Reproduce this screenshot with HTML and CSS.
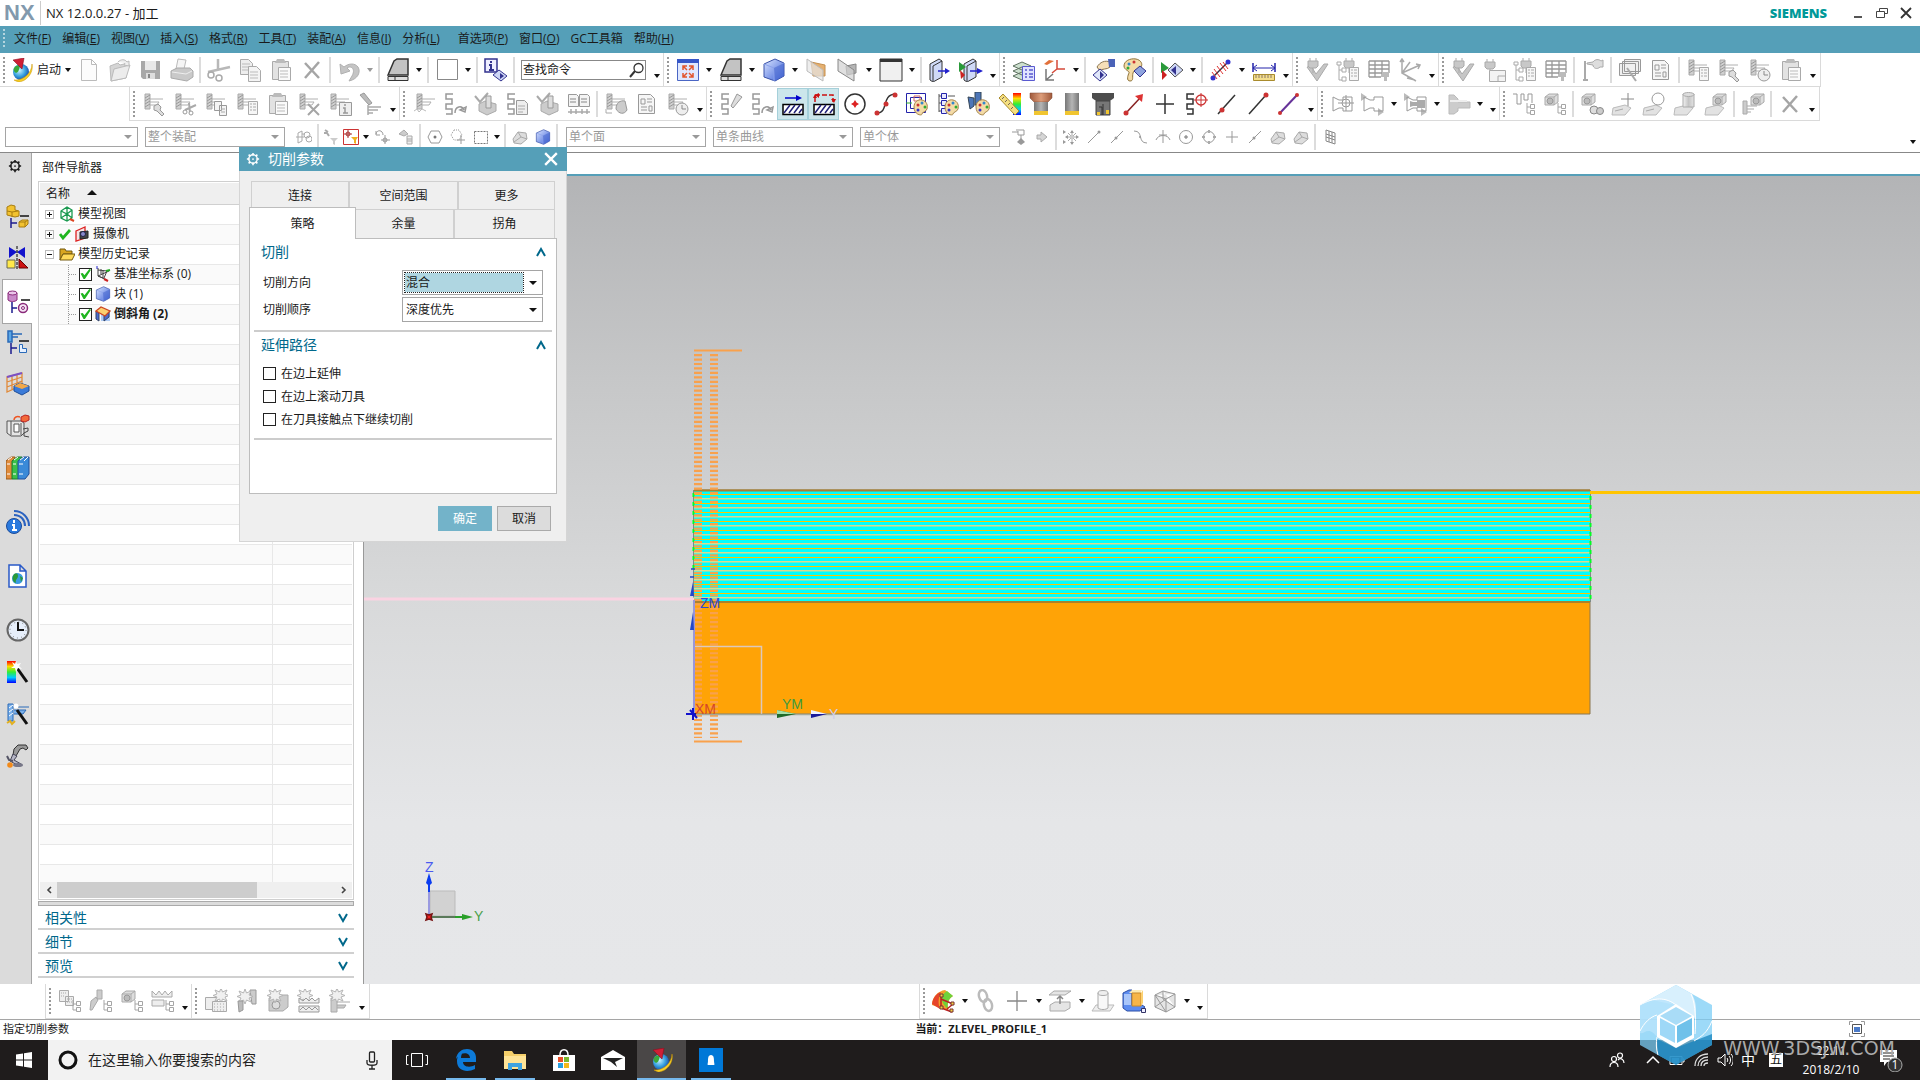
FILE: index.html
```html
<!DOCTYPE html>
<html lang="zh-CN">

<head>
  <meta charset="UTF-8">
  <meta name="viewport" content="width=device-width, initial-scale=1.0">
  <title>NX 12.0.0.27 - 加工</title>
  <link rel="stylesheet" href="styles.css">
</head>

<body>
  <!-- icon sprite -->
  <svg class="sprite" aria-hidden="true">
    <defs>
      <linearGradient id="g-gray" x1="0" y1="0" x2="1" y2="0"><stop offset="0" stop-color="#f2f2f2"/><stop offset=".5" stop-color="#c4c4c4"/><stop offset="1" stop-color="#e4e4e4"/></linearGradient>
      <linearGradient id="g-blue" x1="0" y1="0" x2="1" y2="1"><stop offset="0" stop-color="#dbe6ff"/><stop offset="1" stop-color="#3a5fd8"/></linearGradient>
      <linearGradient id="g-steel" x1="0" y1="0" x2="1" y2="0"><stop offset="0" stop-color="#777"/><stop offset=".5" stop-color="#b5b5b5"/><stop offset="1" stop-color="#777"/></linearGradient>
      <linearGradient id="g-copper" x1="0" y1="0" x2="1" y2="0"><stop offset="0" stop-color="#a05a3c"/><stop offset=".5" stop-color="#dd9d7a"/><stop offset="1" stop-color="#a05a3c"/></linearGradient>
      <linearGradient id="g-rain" x1="0" y1="0" x2="0" y2="1"><stop offset="0" stop-color="#f00"/><stop offset=".25" stop-color="#fd0"/><stop offset=".5" stop-color="#3e3"/><stop offset=".75" stop-color="#0cf"/><stop offset="1" stop-color="#00f"/></linearGradient>
      <radialGradient id="g-globe" cx=".4" cy=".4" r=".6"><stop offset="0" stop-color="#cdf2ff"/><stop offset=".6" stop-color="#3aa4e0"/><stop offset="1" stop-color="#1a57b0"/></radialGradient>

      <!-- shared pieces -->
      <g id="p-drill"><path d="M3 2h5v15H3z" fill="#d0d0d0" stroke="#aaa"/><path d="M3 6l5-3M3 9l5-3M3 12l5-3M3 15l5-3" stroke="#999"/><path d="M8 7h13M8 10h9l-2 3H8" fill="none" stroke="#b0b0b0"/></g>
      <g id="p-tree" fill="#fff" stroke="#a5a5a5"><path d="M15 11v10h3M15 15h3" fill="none"/><path d="M18.500 12.500h4v4h-4zM18.500 18.500h4v4h-4z"/></g>
      <g id="p-page" fill="#f6f6f6" stroke="#aaa"><path d="M13.500 9.500h9v13h-9z"/><path d="M15 12h2M18 12h3M15 15h2M18 15h3M15 18h2M18 18h3" fill="none"/></g>
      <g id="p-plug" fill="#c8c8c8" stroke="#aaa"><path d="M3 4h10v5l-2 2H5L3 9zM5 1v3M11 1v3M8 11v5"/></g>
      <g id="p-block"><path d="M2 5l4-3h9v8l-4 3H2z" fill="#ddd" stroke="#aaa"/><path d="M2 5h9v8M11 5l4-3" fill="none" stroke="#aaa"/><circle cx="7" cy="9" r="3" fill="#bbb" stroke="#999"/></g>
      <g id="p-spark" stroke="#b5b5b5" fill="#f0f0f0"><path d="M12 1l1.500 4L18 3l-2 4 4 1.500-4 1.500 2 4-4.500-2L12 16l-1.500-4L6 14l2-4-4-1.500L8 7 6 3l4.500 2z"/></g>
      <g id="p-palette"><path d="M9 15c0-5 4-8 8-7 5 1 6 6 5 9s-5 3-5 5-8 1-8-7z" fill="#f4dba6" stroke="#a5844a"/><circle cx="13" cy="13" r="1.500" fill="#c33"/><circle cx="17" cy="11" r="1.500" fill="#38c"/><circle cx="20" cy="15" r="1.500" fill="#3a3"/><circle cx="13" cy="18" r="1.500" fill="#33c"/></g>
      <g id="p-snake"><path d="M10 2H3v5h6v5H3v5h6v5H3" fill="none" stroke-width="1.500"/></g>
      <g id="p-holder"><path d="M3 5l6 3h4V5h9v14h-9v-3H9l-6 3z" fill="none" stroke="#999"/></g>

      <symbol id="i-globe" viewBox="0 0 24 24"><circle cx="11" cy="14" r="8" fill="url(#g-globe)"/><path d="M4 10c2-3 4-3 6-2-1 3-1 6-4 7-2-1-3-3-2-5z" fill="#3aa83a"/><path d="M4 22c9 1 18-7 18-16 2 9-6 18-14 18z" fill="#f6cf2a" stroke="#c89400" stroke-width=".5"/><path d="M3 2l11-2-2 11z" fill="#cf1f35" stroke="#8d0d20" stroke-width=".6"/></symbol>
      <symbol id="i-new" viewBox="0 0 24 24"><path d="M4.500 1.500h10l5 5v16h-15zM14.500 1.500v5h5" fill="#fcfcfc" stroke="#bbb"/></symbol>
      <symbol id="i-open" viewBox="0 0 24 24"><path d="M2 8l8-3 2 2 8-2-2 15-15 3z" fill="#d5d5d5" stroke="#bbb"/><path d="M6 11l16-4-4 13-15 3z" fill="#ececec" stroke="#bbb"/><path d="M10 4c3-3 7-3 9 0l2-1v5l-5-1 1-2" fill="#eee" stroke="#bbb"/></symbol>
      <symbol id="i-save" viewBox="0 0 24 24"><path d="M2 3h19v18H4l-2-2z" fill="#a8a8a8"/><path d="M6 3h11v9H6z" fill="#e8e8e8"/><path d="M7 15h9v6H7z" fill="#ddd"/><path d="M9 16h2v4H9z" fill="#888"/></symbol>
      <symbol id="i-print" viewBox="0 0 24 24"><path d="M8 1l8 1-2 9H6z" fill="#f5f5f5" stroke="#bbb"/><path d="M1 13l6-3h13l3 3v6l-6 4L1 20z" fill="#c9c9c9" stroke="#aaa"/><path d="M2 14l14 2 6-3" fill="none" stroke="#eee"/></symbol>
      <symbol id="i-cut" viewBox="0 0 24 24"><path d="M11 1v12M1 14l22-5" stroke="#b8b8b8" stroke-width="2.500"/><circle cx="4" cy="17" r="3" fill="none" stroke="#aaa" stroke-width="1.500"/><circle cx="12" cy="20" r="3" fill="none" stroke="#aaa" stroke-width="1.500"/></symbol>
      <symbol id="i-copy" viewBox="0 0 24 24"><path d="M2.500 1.500h8l4 4v11h-12z" fill="#eee" stroke="#aaa"/><path d="M4 6h8M4 9h8M4 12h8" stroke="#bbb"/><path d="M10.500 8.500h8l4 4v11h-12z" fill="#f4f4f4" stroke="#aaa"/><path d="M12 14h8M12 17h8M12 20h8" stroke="#bbb"/></symbol>
      <symbol id="i-paste" viewBox="0 0 24 24"><path d="M3.500 3.500h16v18h-16z" fill="#e2e2e2" stroke="#aaa"/><path d="M8 1h7l2 4H6z" fill="#bbb"/><path d="M9.500 9.500h12v13h-12z" fill="#fafafa" stroke="#aaa"/><path d="M11 13h8M11 16h8M11 19h8" stroke="#bbb"/></symbol>
      <symbol id="i-x" viewBox="0 0 24 24"><path d="M5 5l14 15M19 4L5 20" stroke="#a5a5a5" stroke-width="2.500"/></symbol>
      <symbol id="i-undo" viewBox="0 0 24 24"><path d="M3 6l1 10 9-3-3-3c4-3 9 1 5 8l-3 5c9-2 12-9 9-14-3-4-9-4-14 0z" fill="#c4c4c4" stroke="#b0b0b0"/></symbol>
      <symbol id="i-profile" viewBox="0 0 24 24"><path d="M2 17L8 3l3-2h11v16z" fill="#c3c3c3" stroke="#333" stroke-width="1.500"/><path d="M2 18.500h20v4H2zM9 18v5" fill="#ddd" stroke="#333"/></symbol>
      <symbol id="i-square" viewBox="0 0 24 24"><path d="M2.500 1.500h20v20h-20z" fill="#fff" stroke="#888"/></symbol>
      <symbol id="i-info" viewBox="0 0 24 24"><path d="M1 1h12v13H1z" fill="#eef" stroke="#33338f" stroke-width="1.500"/><path d="M7 3v2M5 7h2v5M5 12h5" fill="none" stroke="#33338f" stroke-width="2"/><path d="M9 17l6-5 8 6-6 5z" fill="#cdd6f5" stroke="#33338f"/><path d="M16 15v6l4-3z" fill="#33338f"/></symbol>
      <symbol id="i-search" viewBox="0 0 16 16"><circle cx="9.500" cy="6" r="4.500" fill="none" stroke="#333" stroke-width="1.300"/><path d="M6 9l-5 6" stroke="#333" stroke-width="2"/></symbol>
      <symbol id="i-fit" viewBox="0 0 24 24"><path d="M1.500 1.500h21v21h-21z" fill="#dfe8ff" stroke="#4a66c4"/><path d="M1 1h22v4H1z" fill="#3656c8"/><path d="M7 12V8h4M7 8l4 4M17 12V8h-4M17 8l-4 4M7 15v4h4M7 19l4-4M17 15v4h-4M17 19l-4-4" fill="none" stroke="#e2552d" stroke-width="1.500"/></symbol>
      <symbol id="i-cube" viewBox="0 0 24 24"><path d="M2 6l11-5 9 4v13l-9 5-11-4z" fill="url(#g-blue)" stroke="#3a52a8"/><path d="M2 6l10 4 10-5M12 10v13" fill="none" stroke="#8ba2ea"/><path d="M12 10l10-5v13l-9 5z" fill="#4a69cf" opacity=".6"/></symbol>
      <symbol id="i-clip" viewBox="0 0 24 24"><path d="M6 4l14 3v11H8z" fill="#e5b070" stroke="#c59050"/><path d="M2 1l16 11v11L2 13z" fill="#e6e6e6" fill-opacity=".7" stroke="#bbb"/></symbol>
      <symbol id="i-clip2" viewBox="0 0 24 24"><path d="M10 8l10-2v9l-9 2z" fill="#b5b5b5" stroke="#888"/><path d="M2 1l16 11v11L2 13z" fill="#d2d2d2" fill-opacity=".7" stroke="#888"/></symbol>
      <symbol id="i-window" viewBox="0 0 24 24"><path d="M1 1h22v22H1z" fill="#f0f0f0" stroke="#333"/><path d="M1 1h22v3H1z" fill="#333"/></symbol>
      <symbol id="i-section" viewBox="0 0 24 24"><path d="M2 6l9-5 3 2v16l-9 5-3-2z" fill="#cfd9f7" stroke="#333"/><path d="M5 8l9-5M5 8v15" stroke="#333" fill="none"/><path d="M10 13h9" stroke="#22c" stroke-width="1.500"/><path d="M17 10l5 3-5 3z" fill="#22c"/></symbol>
      <symbol id="i-section2" viewBox="0 0 24 24"><path d="M5 6l9-5 3 2v16l-9 5-3-2z" fill="#cfd9f7" stroke="#333"/><path d="M8 8l9-5M8 8v15" stroke="#333" fill="none"/><path d="M0 4l7 5-7 5z" fill="#2a9a3a"/><path d="M1 12l5 5-4 4z" fill="#c22"/><path d="M11 13h9" stroke="#22c" stroke-width="1.500"/><path d="M18 10l6 3-6 3z" fill="#22c"/></symbol>
      <symbol id="i-layers" viewBox="0 0 24 24"><path d="M1 18l9-4 9 4-9 4zM1 13l9-4 9 4-9 4zM1 8l9-4 9 4-9 4z" fill="#cde0cf" stroke="#5d705f"/><path d="M10.500 8.500h12v14h-12z" fill="#dfe3ff" stroke="#5a5ad0"/><path d="M13 12h2M17 12h4M13 16h2M17 16h4M13 19h2M17 19h4" stroke="#5a5ad0" stroke-width="1.500"/></symbol>
      <symbol id="i-csys" viewBox="0 0 24 24"><path d="M14 2v9h8M14 11l-5 4" fill="none" stroke="#d54a3a" stroke-width="1.500"/><path d="M1 6l5-4 5 1-7 4z" fill="#e2703a"/><path d="M3 11v11h8M3 22l7-6" fill="none" stroke="#777" stroke-width="1.500"/></symbol>
      <symbol id="i-hand" viewBox="0 0 24 24"><path d="M5 9c3-5 8-7 13-5v5c-3 3-8 1-10 4z" fill="#f6dfb8" stroke="#8a7450"/><path d="M16 1h7v8h-6z" fill="#4a62b8"/><path d="M1 17l7-6 7 6-7 6z" fill="#dfe6fa" stroke="#33338f"/><path d="M8 13v8l4-4z" fill="#33338f"/></symbol>
      <symbol id="i-paint" viewBox="0 0 24 24"><path d="M1 8c0-5 6-8 12-7 5 1 7 5 5 8s-7 2-8 6 1 8-3 8-2-6-1-8-5-3-5-7z" fill="#f4dba6" stroke="#8f733a"/><circle cx="6" cy="6" r="1.500" fill="#38c"/><circle cx="11" cy="4" r="1.500" fill="#c33"/><circle cx="5" cy="10" r="1.500" fill="#3a3"/><path d="M11 13l6-5 6 5-6 6z" fill="#8ea3de" stroke="#33338f"/></symbol>
      <symbol id="i-anim" viewBox="0 0 24 24"><path d="M1 4l8 6-8 5z" fill="#2a9a3a"/><path d="M2 12l5 5-5 5z" fill="#c22"/><path d="M8 12l7-7 8 7-8 7z" fill="#cdd6f5" stroke="#555"/><path d="M11 12l5-4v9z" fill="#33338f"/></symbol>
      <symbol id="i-measure" viewBox="0 0 24 24"><path d="M3 20L20 3" stroke="#334" stroke-width="1.500"/><path d="M5 11l6 8M8 8l6 8M11 5l6 8M3 14l5 7M14 4l5 7" stroke="#d33" stroke-width="1"/><circle cx="4" cy="20" r="2.500" fill="#33c"/><circle cx="19" cy="4" r="2.500" fill="#33c"/></symbol>
      <symbol id="i-ruler" viewBox="0 0 24 24"><path d="M1 5v9M23 5v9" stroke="#22a" stroke-width="1.500"/><path d="M2 10h20M5 7l-4 3 4 3M19 7l4 3-4 3" stroke="#22a" fill="none"/><path d="M1.500 16.500h21v6h-21z" fill="#f3dd8c" stroke="#a98b2d"/><path d="M4 17v3M7 17v3M10 17v3M13 17v3M16 17v3M19 17v3" stroke="#876"/></symbol>

      <symbol id="i-g-check" viewBox="0 0 24 24"><path d="M2 9l4-1 5 8 8-10h4L12 23z" fill="#c6c6c6" stroke="#aaa"/><use href="#p-plug" transform="translate(0 -1)"/></symbol>
      <symbol id="i-g-plug-tree" viewBox="0 0 24 24"><use href="#p-plug" transform="translate(5 -1)"/><path d="M3 7v15h3M3 12h3M1 7h4v-3H1zM6 10h4v4H6zM6 19h4v4H6z" fill="#fff" stroke="#aaa"/><use href="#p-page"/></symbol>
      <symbol id="i-g-plug-page" viewBox="0 0 24 24"><use href="#p-plug"/><path d="M7.500 12.500h16v11h-16zM16 18h7M16 18v5" fill="#f3f3f3" stroke="#aaa"/></symbol>
      <symbol id="i-g-table" viewBox="0 0 24 24"><path d="M2 3h20M2 7h20M2 11h20M2 15h20M2 19h12M2 3v16M8 3v16M15 3v16M22 3v12" stroke="#999" stroke-width="1.300"/><path d="M15 14h7v5h-2v4h-3v-4h-2z" fill="#bbb"/></symbol>
      <symbol id="i-g-axes" viewBox="0 0 24 24"><path d="M4 1v14l14 8M4 15L22 7M4 15l8-11M2 4l2-3 2 3M9 20l8 2M18 6l4 1-2 4" fill="none" stroke="#aaa" stroke-width="1.500"/></symbol>
      <symbol id="i-g-flag" viewBox="0 0 24 24"><path d="M4 3v18M2 22h5" stroke="#aaa" stroke-width="2"/><path d="M6 5l6-1c2-3 6-3 8-1l2-1v7h-3c-3 3-7 1-7-2l-6-1z" fill="#ddd" stroke="#aaa"/></symbol>
      <symbol id="i-g-stack" viewBox="0 0 24 24"><path d="M6.500 1.500h16v12h-16zM4.500 3.500h16v12h-16zM1.500 5.500h16v12h-16z" fill="#f0f0f0" stroke="#999"/><path d="M9 10l9 13" stroke="#aaa" stroke-width="2"/></symbol>
      <symbol id="i-g-report" viewBox="0 0 24 24"><path d="M3.500 2.500h12l4 4v15h-16z" fill="#f6f6f6" stroke="#999"/><path d="M6 7h4v5H6zM12 7h5M12 10h5M6 15h6M14 14h3v5h-3zM6 18h6" fill="none" stroke="#999"/></symbol>
      <symbol id="i-g-tpage" viewBox="0 0 24 24"><use href="#p-drill"/><use href="#p-page"/></symbol>
      <symbol id="i-g-twrench" viewBox="0 0 24 24"><use href="#p-drill"/><path d="M12 14l4-2 3 3-1 3 4 4-2 2-5-5-3-1z" fill="#ddd" stroke="#999"/></symbol>
      <symbol id="i-g-tcut" viewBox="0 0 24 24"><use href="#p-drill"/><path d="M23 13l-11 5M16 11l1 10" stroke="#aaa" stroke-width="2"/><circle cx="12" cy="20" r="2" fill="#fff" stroke="#999"/><circle cx="18" cy="21" r="2" fill="#fff" stroke="#999"/></symbol>
      <symbol id="i-g-tcopy" viewBox="0 0 24 24"><use href="#p-drill"/><path d="M10.500 9.500h7v9h-7zM15.500 13.500h7v10h-7z" fill="#f4f4f4" stroke="#999"/><path d="M17 17h4M17 20h4" stroke="#aaa"/></symbol>
      <symbol id="i-g-tx" viewBox="0 0 24 24"><use href="#p-drill"/><path d="M11 12l11 11M22 12L11 23" stroke="#a5a5a5" stroke-width="2"/></symbol>
      <symbol id="i-g-tinfo" viewBox="0 0 24 24"><use href="#p-drill"/><path d="M11.500 10.500h12v13h-12z" fill="#eee" stroke="#999"/><path d="M17 12v2M15 16h2v5M15 21h5" stroke="#999" stroke-width="1.500" fill="none"/></symbol>
      <symbol id="i-g-torch" viewBox="0 0 24 24"><path d="M1 3l4-2 8 10-3 2z" fill="#bbb" stroke="#999"/><path d="M9 13v10M9 15h13M9 18h10M9 21h5" stroke="#aaa" stroke-width="1.500"/></symbol>
      <symbol id="i-g-tclock" viewBox="0 0 24 24"><use href="#p-drill"/><circle cx="16" cy="17" r="6" fill="#eee" stroke="#999"/><path d="M16 13v4h4" fill="none" stroke="#888"/></symbol>
      <symbol id="i-g-gen" viewBox="0 0 24 24"><use href="#p-drill" transform="translate(2 0)"/><path d="M2 19l3-2 2 3 3-3 4 2" fill="none" stroke="#bbb"/></symbol>
      <symbol id="i-g-snake" viewBox="0 0 24 24"><use href="#p-snake" stroke="#999"/><path d="M12 21c0-7 7-8 9-3M23 15l-1 5-5-2z" fill="none" stroke="#999" stroke-width="1.500"/></symbol>
      <symbol id="i-g-verify" viewBox="0 0 24 24"><path d="M1 4l5 6L14 1" fill="none" stroke="#aaa" stroke-width="2"/><path d="M5 12l6-3 11 3v7l-9 4-8-4z" fill="#ccc" stroke="#aaa"/><path d="M12 4h5v12h-5z" fill="#ddd" stroke="#999"/></symbol>
      <symbol id="i-g-spage" viewBox="0 0 24 24"><use href="#p-snake" stroke="#999"/><path d="M11.500 8.500h8l3 3v11h-11z" fill="#eee" stroke="#999"/><path d="M13 14h7M13 17h7M13 20h5" stroke="#aaa"/></symbol>
      <symbol id="i-g-cards" viewBox="0 0 24 24"><path d="M1.500 2.500h8l2 2v10h-10zM12.500 2.500h8l2 2v10h-10z" fill="#f4f4f4" stroke="#999"/><path d="M3 7h6M3 10h6M14 7h6M14 10h6M1 20h22M4 17v5M9 17v5M15 17v5M20 17v5" stroke="#aaa" stroke-width="1.500"/></symbol>
      <symbol id="i-g-drive" viewBox="0 0 24 24"><use href="#p-drill"/><path d="M12 17c0-6 4-9 9-8l2 9c-3 5-8 4-11-1z" fill="#ccc" stroke="#999"/><path d="M2 17v4h6" fill="none" stroke="#aaa"/></symbol>
      <symbol id="i-g-light" viewBox="0 0 24 24"><use href="#p-snake" stroke="#999"/><path d="M12 14l6-12 5 3-9 11z" fill="#ddd" stroke="#999"/></symbol>
      <symbol id="i-g-holder" viewBox="0 0 24 24"><use href="#p-holder"/><circle cx="16" cy="11" r="4" fill="none" stroke="#999"/><path d="M16 3v16M8 11h16" stroke="#999"/></symbol>
      <symbol id="i-g-holder2" viewBox="0 0 24 24"><path d="M0 1l6 4-6 4zM17 16l6 4-6 4z" fill="#bbb"/><use href="#p-holder"/></symbol>
      <symbol id="i-g-holder3" viewBox="0 0 24 24"><path d="M0 1l6 4-6 4zM17 16l6 4-6 4z" fill="#bbb"/><use href="#p-holder"/><path d="M6 9l3 1h4V8h8v8h-8v-2H9l-3 1z" fill="#aaa"/></symbol>
      <symbol id="i-g-shaft" viewBox="0 0 24 24"><path d="M2 3h5l4 4v3h12v6H11v3l-4 3H2z" fill="#ccc" stroke="#bbb"/><path d="M3 9h17" stroke="#eee" stroke-width="2"/></symbol>
      <symbol id="i-g-wave" viewBox="0 0 24 24"><path d="M1 2h4v10h4V2h3v6h4V2h4v9" fill="none" stroke="#999"/><use href="#p-tree"/></symbol>
      <symbol id="i-g-btree" viewBox="0 0 24 24"><use href="#p-block"/><use href="#p-tree"/></symbol>
      <symbol id="i-g-find" viewBox="0 0 24 24"><use href="#p-block"/><circle cx="14" cy="18" r="4" fill="#ddd" stroke="#888"/><circle cx="20" cy="19" r="3.500" fill="#ccc" stroke="#888"/></symbol>
      <symbol id="i-g-pt" viewBox="0 0 24 24"><path d="M2 16l12-3 6 3-6 7H1z" fill="#e2e2e2" stroke="#bbb"/><path d="M17 1v13M10 7h13" stroke="#888"/><path d="M4 19l8-2" stroke="#aaa"/></symbol>
      <symbol id="i-g-ring" viewBox="0 0 24 24"><path d="M2 16l12-3 6 3-6 7H1z" fill="#e2e2e2" stroke="#bbb"/><circle cx="16" cy="7" r="6" fill="none" stroke="#999"/><path d="M4 19l8-2" stroke="#aaa"/></symbol>
      <symbol id="i-g-cyl" viewBox="0 0 24 24"><path d="M2 16l12-3 6 3-6 7H1z" fill="#e2e2e2" stroke="#bbb"/><path d="M10 2h11v13H10z" fill="url(#g-gray)" stroke="#aaa"/><ellipse cx="15.500" cy="2.500" rx="5.500" ry="2" fill="#ddd" stroke="#aaa"/></symbol>
      <symbol id="i-g-bcard" viewBox="0 0 24 24"><path d="M2 16l12-3 6 3-6 7H1z" fill="#e2e2e2" stroke="#bbb"/><use href="#p-block" transform="translate(7 0)"/></symbol>
      <symbol id="i-g-bdrill" viewBox="0 0 24 24"><use href="#p-block" transform="translate(8 0)"/><path d="M2 9h4v13H2zM6 14h10M6 17h7M6 20h4" fill="#ccc" stroke="#aaa"/></symbol>
      <symbol id="i-g-grid-tree" viewBox="0 0 24 24"><path d="M1.500 1.500h9v11h-9zM7.500 7.500h8v9h-8z" fill="#eee" stroke="#aaa"/><path d="M3 4h6M3 7h4M9 10h5M9 13h5" stroke="#aaa" stroke-dasharray="1 1"/><use href="#p-tree"/></symbol>
      <symbol id="i-g-mill-tree" viewBox="0 0 24 24"><path d="M8 1h5v9H8zM2 12l5-4 2 3-6 10H1z" fill="#ccc" stroke="#aaa"/><use href="#p-tree"/></symbol>
      <symbol id="i-g-crown-tree" viewBox="0 0 24 24"><path d="M1 2v6h20V2l-4 4-3-4-3 4-3-4-3 4zM1 11h12v6H1z" fill="#eee" stroke="#aaa"/><use href="#p-tree"/></symbol>
      <symbol id="i-g-newgrid" viewBox="0 0 24 24"><path d="M1.500 8.500h12v12h-12z" fill="#eee" stroke="#aaa"/><use href="#p-spark" transform="translate(5 -2)"/><path d="M8.500 12.500h14v10h-14z" fill="#eee" stroke="#aaa"/><path d="M10 15h11M10 18h11M10 21h11" stroke="#aaa" stroke-dasharray="1 2"/></symbol>
      <symbol id="i-g-newmill" viewBox="0 0 24 24"><path d="M15 1h6v14h-4z" fill="#ccc" stroke="#999"/><use href="#p-spark" transform="translate(-2 -1)"/><path d="M3 12h5v9l-4 2z" fill="#bbb" stroke="#999"/></symbol>
      <symbol id="i-g-newblock" viewBox="0 0 24 24"><path d="M3 9l6-3h13v12l-5 4H3z" fill="#ccc" stroke="#aaa"/><circle cx="10" cy="16" r="4" fill="#ddd" stroke="#999"/><use href="#p-spark" transform="translate(-3 -2)"/></symbol>
      <symbol id="i-g-newcrown" viewBox="0 0 24 24"><use href="#p-spark" transform="translate(-4 -2)"/><path d="M2 9v5h20V9l-4 3-3-3-3 3-3-3-3 3zM2 17h20v6H2z" fill="#eee" stroke="#999"/><path d="M3 21l3-3 3 3 3-3 3 3 3-3 3 3" fill="none" stroke="#999"/></symbol>
      <symbol id="i-g-newop" viewBox="0 0 24 24"><path d="M3 9h6v14H3zM9 13h13M9 16h9l-2 3H9" fill="#ccc" stroke="#aaa"/><use href="#p-spark" transform="translate(-3 -2)"/></symbol>
      <symbol id="i-g-chain" viewBox="0 0 24 24" fill="none" stroke="#bbb"><g stroke-width="2.500"><ellipse cx="9" cy="7" rx="4" ry="6" transform="rotate(-15 9 7)"/><ellipse cx="14" cy="16" rx="4" ry="6" transform="rotate(-15 14 16)"/></g></symbol>
      <symbol id="i-g-plus" viewBox="0 0 24 24"><path d="M12 2v20M2 12h20" stroke="#888" stroke-width="1.300"/></symbol>
      <symbol id="i-g-lift" viewBox="0 0 24 24"><path d="M6 2h17l-6 4H1zM2 16l5-3h15v6l-5 3H2z" fill="#e5e5e5" stroke="#aaa"/><path d="M12 15V8M9 10l3-3 3 3" fill="none" stroke="#888" stroke-width="1.500"/></symbol>
      <symbol id="i-g-tube" viewBox="0 0 24 24"><path d="M5 16h18l-4 6H1z" fill="#eee" stroke="#bbb"/><path d="M7 4v15c2 2 8 2 10 0V4" fill="#f8f8f8" stroke="#aaa"/><ellipse cx="12" cy="4" rx="5" ry="2.500" fill="#eee" stroke="#aaa"/></symbol>
      <symbol id="i-g-wire" viewBox="0 0 24 24"><path d="M2 6l8-4 12 3v13l-9 5-11-5zM2 6l11 4 9-5M13 10v13M2 18l11-8M10 2v8l12 8M2 6l11 17" fill="#e5e5e5" stroke="#999"/></symbol>
      <symbol id="i-hot" viewBox="0 0 24 24"><path d="M1 16C1 8 7 2 14 1l8 6c-6 4-6 10-4 15z" fill="#f2a02a"/><path d="M10 7l6-5 6 5c-5 3-6 8-5 13-3-2-7-8-7-13z" fill="#6ed23a"/><path d="M1 15C2 8 6 4 10 3c-3 6-3 12-1 17z" fill="#e6452a"/><path d="M10 6v13l11 4M10 10l12 5-6 5" fill="none" stroke="#b22" stroke-width="1.500"/><path d="M9 5h3v3H9zM9 17h3v3H9zM20 13h3v3h-3zM19 20h3v3h-3z" fill="#f5d040" stroke="#733"/></symbol>
      <symbol id="i-ipw" viewBox="0 0 24 24"><path d="M1 4l6-3h3v15h10l3 2-5 4H5l-4-3z" fill="#5c8cf0" stroke="#2c4fa6"/><path d="M7 4l3-3h10l-2 3z" fill="#fde9b0"/><path d="M10 4h9v13h-9z" fill="#f7b548" stroke="#c88a2a"/><path d="M19 4l2-3v13l-2 3z" fill="#fbd070"/><path d="M2 5h7v11H2z" fill="#a9c6fa"/><path d="M19.500 19.500h4v4h-4z" fill="#eef" stroke="#336"/></symbol>

      <symbol id="i-hatch1" viewBox="0 0 24 24"><path d="M4 6h13" stroke="#00c" stroke-width="1.500"/><path d="M15 3l6 3-6 3z" fill="#00c"/><path d="M2 12.500h20v10H2z" fill="#fff" stroke="#000" stroke-width="1.500"/><path d="M3 21l6-8M8 21l6-8M13 21l6-8M18 21l3-4" stroke="#227" stroke-width="1.500"/></symbol>
      <symbol id="i-hatch2" viewBox="0 0 24 24"><path d="M3 10V3h18v7" fill="none" stroke="#c11" stroke-width="1.500" stroke-dasharray="5 2"/><path d="M1 6l2-4 2 4zM7 1v5L3 3zM19 7h5l-2 4z" fill="#c11"/><path d="M2 12.500h20v10H2z" fill="#fff" stroke="#000" stroke-width="1.500"/><path d="M3 21l6-8M8 21l6-8M13 21l6-8M18 21l3-4" stroke="#227" stroke-width="1.500"/></symbol>
      <symbol id="i-circle" viewBox="0 0 24 24"><circle cx="12" cy="12" r="10" fill="none" stroke="#333" stroke-width="1.500"/><path d="M12 8l1.500 2.500L16 12l-2.500 1.500L12 16l-1.500-2.500L8 12l2.500-1.500z" fill="#d22"/></symbol>
      <symbol id="i-spline" viewBox="0 0 24 24"><path d="M3 21c12 0 4-18 18-19" fill="none" stroke="#333" stroke-width="1.500"/><circle cx="3" cy="21" r="2.500" fill="#c33"/><circle cx="12" cy="12" r="2.500" fill="#c33"/><circle cx="21" cy="3" r="2.500" fill="#c33"/></symbol>
      <symbol id="i-pal1" viewBox="0 0 24 24"><path d="M1.500 1.500h19v19h-19zM5.500 5.500h11v11h-11z" fill="#fff" stroke="#22a"/><path d="M1 11h6" stroke="#3a3"/><path d="M9 4h6v5H9z" fill="none" stroke="#c66"/><use href="#p-palette"/></symbol>
      <symbol id="i-pal2" viewBox="0 0 24 24"><path d="M3 2v18M3 4h3M3 11h3M3 19h3M12 4h7M12 11h7" stroke="#555"/><path d="M5.500 1.500h5v5h-5zM5.500 8.500h5v5h-5zM5.500 16.500h5v5h-5z" fill="#e8e8ff" stroke="#22a"/><use href="#p-palette"/></symbol>
      <symbol id="i-pal3" viewBox="0 0 24 24"><path d="M1 5l6 1v8l-4 3zM8 0h6v13H8z" fill="#4d76b8" stroke="#345"/><use href="#p-palette"/></symbol>
      <symbol id="i-rainruler" viewBox="0 0 24 24"><path d="M15 1h8v22h-8z" fill="url(#g-rain)"/><path d="M1 6l4-4 16 17-4 4z" fill="#f4df80" stroke="#a98b2d"/><path d="M6 5l-2 2M9 8l-2 2M12 11l-2 2M15 15l-2 2" stroke="#765"/></symbol>
      <symbol id="i-tool1" viewBox="0 0 24 24"><path d="M1 1h22v5l-4 4H5L1 6z" fill="url(#g-copper)" stroke="#7d4630" stroke-width=".5"/><path d="M5 10h14v10H5z" fill="url(#g-steel)"/><path d="M5 19h14v4H5z" fill="#f0c530"/></symbol>
      <symbol id="i-tool2" viewBox="0 0 24 24"><path d="M5 1h14v19H5z" fill="url(#g-steel)"/><path d="M5 19h14v4H5z" fill="#f0c530"/></symbol>
      <symbol id="i-tool3" viewBox="0 0 24 24"><path d="M1 1h22v5l-4 3H5L1 6z" fill="#4d4d4d"/><path d="M5 9h14v14H5z" fill="#777" stroke="#444"/><path d="M12 12v11M8 15h3v8" stroke="#333" fill="none"/><path d="M6 20h3v3H6zM15 18h3v4h-3z" fill="#f0c530"/></symbol>
      <symbol id="i-vector" viewBox="0 0 24 24"><path d="M4 21L18 6" stroke="#822" stroke-width="1.500"/><path d="M21 2l-1 8-7-6z" fill="#d33"/><circle cx="4" cy="21" r="2.500" fill="#c33"/></symbol>
      <symbol id="i-plus" viewBox="0 0 24 24"><path d="M12 2v20M3 12h18" stroke="#333" stroke-width="1.500"/></symbol>
      <symbol id="i-snakept" viewBox="0 0 24 24"><use href="#p-snake" stroke="#333"/><circle cx="17" cy="8" r="5" fill="none" stroke="#c33" stroke-width="1.300"/><path d="M17 1v14M10 8h14" stroke="#c33"/></symbol>
      <symbol id="i-line1" viewBox="0 0 24 24"><path d="M3 22L20 3" stroke="#333" stroke-width="1.500"/><circle cx="7" cy="18" r="2.500" fill="#c33"/></symbol>
      <symbol id="i-line2" viewBox="0 0 24 24"><path d="M3 22L20 3" stroke="#333" stroke-width="1.500"/><circle cx="20" cy="3" r="2.500" fill="#c33"/></symbol>
      <symbol id="i-line3" viewBox="0 0 24 24"><path d="M3 21L20 3" stroke="#639" stroke-width="2"/><circle cx="3" cy="21" r="2" fill="#c33"/><circle cx="20" cy="3" r="2" fill="#c33"/></symbol>

      <symbol id="i-s-pair" viewBox="0 0 16 16" fill="none" stroke="#aaa"><path d="M2 4l4-2v10l-4 2zM6 5h3M0 8h8"/><circle cx="11" cy="6" r="3"/><circle cx="13" cy="10" r="3"/></symbol>
      <symbol id="i-s-filter" viewBox="0 0 16 16"><path d="M1 4h3l2 3M2 1l3 2" fill="none" stroke="#aaa" stroke-width="2"/><path d="M7 9h8l-3 3v4l-2-1v-3z" fill="#ccc"/></symbol>
      <symbol id="i-s-red" viewBox="0 0 16 16"><path d="M.5.5h15v15H.5z" fill="#fff" stroke="#c33"/><circle cx="5" cy="5" r="2" fill="none" stroke="#a33"/><path d="M5 1v8M1 5h8" stroke="#a33"/><path d="M8 8h7l-2 3v4l-2-1v-3z" fill="#f0b020"/></symbol>
      <symbol id="i-s-turn" viewBox="0 0 16 16" fill="none" stroke="#999"><path d="M1 5c1-5 7-4 7 1M1 2v4h4M10 6v9M6 11h9"/><circle cx="10" cy="11" r="2"/></symbol>
      <symbol id="i-s-up" viewBox="0 0 16 16"><path d="M1 5l5-4 4 4-4 2z" fill="#ccc" stroke="#aaa"/><path d="M9 7h5v8H9zM9 10h5M9 12h5" fill="#eee" stroke="#aaa"/></symbol>
      <symbol id="i-s-hex" viewBox="0 0 16 16"><path d="M4 2h8l3 6-3 6H4L1 8z" fill="none" stroke="#999"/><circle cx="8" cy="8" r="1.500" fill="#777"/></symbol>
      <symbol id="i-s-hexpt" viewBox="0 0 16 16" fill="none" stroke="#999"><path d="M4 1h5l3 5-3 5H4L1 6z" stroke-dasharray="1 1"/><path d="M11 6v9M7 11h8"/></symbol>
      <symbol id="i-s-box" viewBox="0 0 16 16"><path d="M1.500 2.500h13v12h-13z" fill="none" stroke="#777" stroke-dasharray="2 1"/></symbol>
      <symbol id="i-s-mesh" viewBox="0 0 16 16"><path d="M1 10l5-7 8 1 1 6-6 5-7-1z" fill="#ddd" stroke="#aaa"/><path d="M6 3l3 5 6 2M9 8l-7 5" fill="none" stroke="#aaa"/></symbol>
      <symbol id="i-s-wave" viewBox="0 0 16 16"><path d="M1 3h6M5 1h8v5H7V2M10 6v4" fill="none" stroke="#999"/><path d="M10 9l4 4-4 3-4-3z" fill="#999"/></symbol>
      <symbol id="i-s-arrow" viewBox="0 0 16 16"><path d="M3 6h4V3l6 5-6 5v-3H3z" fill="#d5d5d5" stroke="#aaa"/></symbol>
      <symbol id="i-s-move" viewBox="0 0 16 16"><path d="M9 2v13M3 8h12M5 4l8 8M13 4l-8 8" stroke="#aaa"/><path d="M7 4l2-3 2 3zM7 13l2 3 2-3zM13 6l3 2-3 2zM5 6L2 8l3 2z" fill="#999"/><circle cx="9" cy="8" r="2" fill="#ccc"/><path d="M0 1l3 2-3 2zM0 11l3 2-3 2z" fill="#999"/></symbol>
      <symbol id="i-s-l1" viewBox="0 0 16 16"><path d="M2 14L13 3" stroke="#999"/><circle cx="13" cy="3" r="1.500" fill="#999"/></symbol>
      <symbol id="i-s-l2" viewBox="0 0 16 16"><path d="M2 14L14 2" stroke="#999"/><circle cx="7" cy="9" r="1.500" fill="#999"/></symbol>
      <symbol id="i-s-s" viewBox="0 0 16 16"><path d="M2 2c10 0 3 12 13 12" fill="none" stroke="#999"/><circle cx="8" cy="8" r="1" fill="#999"/></symbol>
      <symbol id="i-s-arc" viewBox="0 0 16 16"><path d="M1 11c2-6 12-6 14 0M8 1v13M4 6h8" fill="none" stroke="#999"/></symbol>
      <symbol id="i-s-c" viewBox="0 0 16 16"><circle cx="8" cy="8" r="6.500" fill="none" stroke="#999"/><path d="M8 6v4M6 8h4" stroke="#777"/></symbol>
      <symbol id="i-s-c4" viewBox="0 0 16 16"><circle cx="8" cy="8" r="5.500" fill="none" stroke="#999"/><path d="M7 1h2v3H7zM7 12h2v3H7zM1 7h3v2H1zM12 7h3v2h-3z" fill="#aaa"/></symbol>
      <symbol id="i-s-plus" viewBox="0 0 16 16"><path d="M8 2v12M2 8h12" stroke="#999"/></symbol>
      <symbol id="i-s-grid" viewBox="0 0 16 16"><path d="M4 1l9 3v11l-9-3zM7 2v11M10 3v11M4 5l9 3M4 8l9 3" fill="none" stroke="#888"/></symbol>

      <symbol id="i-gear" viewBox="0 0 16 16" fill="none" stroke="currentColor"><circle cx="8" cy="8" r="4.800" stroke-width="1.600"/><circle cx="8" cy="8" r="1" fill="currentColor" stroke="none"/><path d="M8 1v3M8 12v3M1 8h3M12 8h3M3 3l2 2M11 11l2 2M13 3l-2 2M5 11l-2 2" stroke-width="1.800"/></symbol>
      <symbol id="i-r-asm" viewBox="0 0 24 24"><path d="M1 3l4-2 4 1v4l4 1v5l-4 1-8-2z" fill="#f2c230" stroke="#a87d10"/><path d="M1 7l5 1 6-1M6 8v5" fill="none" stroke="#a87d10"/><path d="M5 14v10M5 19h6" stroke="#1d1d8f" stroke-width="1.500"/><path d="M14 12h9" stroke="#111" stroke-width="1.500"/><path d="M13 18l3-2h6v4l-3 3h-6z" fill="#f2c230" stroke="#a87d10"/><path d="M13 18h6l3-2M19 18v5" fill="none" stroke="#a87d10"/></symbol>
      <symbol id="i-r-con" viewBox="0 0 24 24"><path d="M3 1l8 5-8 6zM19 1l-8 5 8 6z" fill="#11c"/><path d="M11 0v24" stroke="#000" stroke-dasharray="3 1"/><path d="M1 14h8v8H1z" fill="#ffe94a" stroke="#665"/><path d="M13 13v9h9z" fill="#c11" stroke="#600"/></symbol>
      <symbol id="i-r-part" viewBox="0 0 24 24"><path d="M1 3v7c2 2 7 2 9 0V3z" fill="#c989c9" stroke="#8a2a7a"/><ellipse cx="5.500" cy="3" rx="4.500" ry="2" fill="#e9c5e9" stroke="#8a2a7a"/><path d="M5 12v11M5 18h5" stroke="#1d1d8f" stroke-width="1.500"/><path d="M14 10h9" stroke="#111" stroke-width="1.500"/><circle cx="16" cy="18" r="4.500" fill="#f5e5f5" stroke="#8a2a7a" stroke-width="1.500"/><circle cx="16" cy="18" r="1.500" fill="none" stroke="#8a2a7a"/></symbol>
      <symbol id="i-r-op" viewBox="0 0 24 24"><path d="M2 1h4v11H2zM6 4h10M6 7h6" fill="#59a6e6" stroke="#2a6ab8" stroke-width="1.500"/><path d="M5 13v11M5 18h6" stroke="#1d1d8f" stroke-width="1.500"/><path d="M13 11h10" stroke="#111" stroke-width="1.500"/><path d="M13.500 14.500h3v4h4v4h-7z" fill="#e6f0ff" stroke="#2a6ab8"/></symbol>
      <symbol id="i-r-mach" viewBox="0 0 24 24"><path d="M1 5l15-4v12L1 20zM1 10l15-5M1 15l15-6M6 4v14M11 3v12" fill="none" stroke="#e08a3a" stroke-width="1.300"/><path d="M1 5l15-4" stroke="#7a50c8" stroke-width="2"/><path d="M8 14l6-3 9 3v5l-7 4-8-4z" fill="#3a7ad8" stroke="#1f4f9a"/><path d="M8 14l6-3 9 3-7 3z" fill="#f2a84a"/></symbol>
      <symbol id="i-r-sim" viewBox="0 0 24 24"><path d="M1 7h14l3 2v10l-3 3H5l-4-3z" fill="#e6e6e6" stroke="#555"/><path d="M5 7v14M8 10h5v8H8zM15 9v12" fill="#fff" stroke="#555"/><path d="M15 3l4-2 4 1v4l-4 2-4-1z" fill="#f26a3a" stroke="#b22"/><path d="M8 6c0-3 3-4 6-3" fill="none" stroke="#e52" stroke-width="1.500"/><path d="M17 15l5-1v3l-4 2v3l5 1" fill="none" stroke="#444"/></symbol>
      <symbol id="i-r-books" viewBox="0 0 24 24"><path d="M0 5l5-4h4v18l-3 4H0z" fill="#e08a3a" stroke="#9a5a1a"/><path d="M6 5l5-4h5v18l-4 4H6z" fill="#3ac04a" stroke="#1a7a2a"/><path d="M12 5l5-4h6v17l-4 5h-7z" fill="#3a8ad8" stroke="#1f4f9a"/><path d="M2 4l4-3M8 4l4-3M14 4l4-3M18 5l4-4M1 8h3M1 18h3M7 8h3M7 18h3M13 8h4M13 18h4" stroke="#fff"/></symbol>
      <symbol id="i-r-info" viewBox="0 0 24 24"><circle cx="8" cy="16" r="7.500" fill="#2a7ade" stroke="#1a4a9a"/><path d="M8 10v3M6 15h2v5M6 20h5" stroke="#fff" stroke-width="2" fill="none"/><path d="M8 1c9 0 15 7 15 15M8 5c7 0 11 5 11 11" fill="none" stroke="#2a62c0" stroke-width="2"/></symbol>
      <symbol id="i-r-web" viewBox="0 0 24 24"><path d="M3 1h11l6 6v16H3zM14 1v6h6" fill="#fff" stroke="#2a5ac8" stroke-width="1.500"/><circle cx="11.500" cy="14.500" r="5.500" fill="#3a9ae0"/><path d="M7 12c2-4 5-3 5 0s-3 3-2 7c-3-1-4-4-3-7zM14 12l3 2-2 4z" fill="#2a9a3a"/></symbol>
      <symbol id="i-r-clock" viewBox="0 0 24 24"><circle cx="12" cy="12" r="10.500" fill="#e6eefa" stroke="#666" stroke-width="2"/><path d="M12 4v8h6" fill="none" stroke="#111" stroke-width="2"/><circle cx="12" cy="12" r="8" fill="none" stroke="#777" stroke-dasharray="1 3.200"/></symbol>
      <symbol id="i-r-rain" viewBox="0 0 24 24"><path d="M1 1h9v22H1z" fill="url(#g-rain)"/><path d="M11 8l10 14" stroke="#111" stroke-width="3"/><path d="M10 1l1 3 4-1-2 3 3 3-4-1-2 4-1-4-4 0 3-2-2-4 3 2z" fill="#fff"/></symbol>
      <symbol id="i-r-wiz" viewBox="0 0 24 24"><path d="M2 2h5v17H2z" fill="#7ab0ea" stroke="#2a6ab8"/><path d="M3 6l4-3M3 10l4-3M3 14l4-3" stroke="#fff"/><path d="M8 5h15M8 8h12l-3 4H8" fill="#7ab0ea" stroke="#2a6ab8"/><path d="M11 8l10 14" stroke="#111" stroke-width="3"/><path d="M1 21l3-2 2 3 3-3" fill="none" stroke="#e2b020" stroke-width="2"/><circle cx="10" cy="4" r="2.500" fill="#fff"/></symbol>
      <symbol id="i-r-robot" viewBox="0 0 24 24"><path d="M8 5l4-4h8l2 3-2 2-3-2-3 1-4 7-3-1z" fill="#999" stroke="#333"/><path d="M7 10l4 2-3 4 7 4-2 2-9-5z" fill="#b5b5c5" stroke="#445"/><path d="M1 12l2 4 4 1" fill="none" stroke="#556" stroke-width="2"/><ellipse cx="12" cy="21" rx="5" ry="2" fill="#778"/><circle cx="4" cy="21" r="2.800" fill="#f28a1a"/></symbol>

      <symbol id="i-t-view" viewBox="0 0 16 16" fill="none" stroke="#1a9a50" stroke-width="1.300"><path d="M2 5l6-4 5 3v8l-5 3-6-3zM2 5l6 3 5-4M8 8v7M8 1v7l5 4M2 12l6-4"/><path d="M11 13l4 2" stroke="#d42" stroke-width="2"/></symbol>
      <symbol id="i-t-check" viewBox="0 0 12 12"><path d="M1 6l3 4 7-8" fill="none" stroke="#1fb51f" stroke-width="2.800"/></symbol>
      <symbol id="i-t-cam" viewBox="0 0 16 16"><path d="M2 5l9-4v11l-9 3z" fill="#f6e6e6" stroke="#d22" stroke-width="1.300"/><path d="M6 6l8-1v7l-8 1z" fill="#444" stroke="#222"/><circle cx="9" cy="8" r="2.500" fill="#88c" stroke="#224"/></symbol>
      <symbol id="i-t-folder" viewBox="0 0 16 16"><path d="M1 3h5l1 2h6v3H4l-3 6z" fill="#d9a520" stroke="#755a10"/><path d="M4 8h12l-3 6H1z" fill="#ffd95a" stroke="#755a10"/></symbol>
      <symbol id="i-t-csys" viewBox="0 0 16 16" fill="none" stroke="#444"><path d="M3 2v8l9 4M3 10l11-5M3 4l9 1-3 7M6 8V3M3 10l5 2V4"/><path d="M11 5l4-1" stroke="#2a2" stroke-width="2"/><path d="M9 13l4 2" stroke="#c22" stroke-width="2"/><path d="M2 0v3" stroke="#22c"/></symbol>
      <symbol id="i-t-chamfer" viewBox="0 0 16 16"><path d="M6 6h9v9H6z" fill="#aecbf5"/><path d="M1 5v8l3 2V7zM9 10v5l5-4V6z" fill="#4a69cf" stroke="#346"/><path d="M1 5l5-4 9 4-5 5z" fill="#fbd070" stroke="#c42" stroke-width="1.300"/></symbol>
    </defs>
  </svg>

  <div class="app">
    <header class="titlebar">
      <span class="nx">NX</span>
      <h1>NX 12.0.0.27 - 加工</h1>
      <span class="siemens">SIEMENS</span>
      <button class="win" aria-label="最小化"><svg viewBox="0 0 12 12"><path d="M2 10h8" stroke="#555" stroke-width="2"/></svg></button>
      <button class="win" aria-label="还原"><svg viewBox="0 0 12 12"><path d="M3.500 4V1.500h8v5H9M.5 4.500h8v6h-8z" fill="none" stroke="#444"/></svg></button>
      <button class="win" aria-label="关闭"><svg viewBox="0 0 12 12"><path d="M1 1l10 10M11 1L1 11" stroke="#333" stroke-width="1.800"/></svg></button>
    </header>

    <nav class="menubar">
      <i class="grip"></i>
      <a href="#">文件(<u>F</u>)</a>
      <a href="#">编辑(<u>E</u>)</a>
      <a href="#">视图(<u>V</u>)</a>
      <a href="#">插入(<u>S</u>)</a>
      <a href="#">格式(<u>R</u>)</a>
      <a href="#">工具(<u>T</u>)</a>
      <a href="#">装配(<u>A</u>)</a>
      <a href="#">信息(<u>I</u>)</a>
      <a href="#">分析(<u>L</u>)</a>
      <a href="#" class="wide">首选项(<u>P</u>)</a>
      <a href="#">窗口(<u>O</u>)</a>
      <a href="#">GC工具箱</a>
      <a href="#">帮助(<u>H</u>)</a>
    </nav>

    <div class="toolbar">
      <div class="group first"><i class="grip"></i>
        <button class="tb start"><svg><use href="#i-globe"/></svg>启动<b class="arr"></b></button>
        <button class="tb"><svg><use href="#i-new"/></svg></button>
        <button class="tb"><svg><use href="#i-open"/></svg></button>
        <button class="tb"><svg><use href="#i-save"/></svg></button>
        <button class="tb"><svg><use href="#i-print"/></svg></button>
        <i class="sep"></i>
        <button class="tb"><svg><use href="#i-cut"/></svg></button>
        <button class="tb"><svg><use href="#i-copy"/></svg></button>
        <button class="tb"><svg><use href="#i-paste"/></svg></button>
        <button class="tb"><svg><use href="#i-x"/></svg></button>
        <i class="sep"></i>
        <button class="tb"><svg><use href="#i-undo"/></svg></button><b class="arr off"></b>
        <i class="sep"></i>
        <button class="tb"><svg><use href="#i-profile"/></svg></button><b class="arr"></b>
        <i class="sep"></i>
        <button class="tb"><svg><use href="#i-square"/></svg></button><b class="arr"></b>
        <i class="sep"></i>
        <button class="tb"><svg><use href="#i-info"/></svg></button>
        <i class="sep"></i>
        <label class="finder"><input type="text" value="查找命令" aria-label="查找命令"><svg><use href="#i-search"/></svg></label>
        <b class="arr low"></b>
      </div>
      <div class="group"><i class="grip"></i>
        <button class="tb"><svg><use href="#i-fit"/></svg></button><b class="arr"></b>
        <button class="tb"><svg><use href="#i-profile"/></svg></button><b class="arr"></b>
        <button class="tb"><svg><use href="#i-cube"/></svg></button><b class="arr"></b>
        <button class="tb"><svg><use href="#i-clip"/></svg></button>
        <button class="tb"><svg><use href="#i-clip2"/></svg></button><b class="arr"></b>
        <button class="tb"><svg><use href="#i-window"/></svg></button><b class="arr"></b>
        <i class="sep"></i>
        <button class="tb"><svg><use href="#i-section"/></svg></button>
        <button class="tb"><svg><use href="#i-section2"/></svg></button>
        <b class="arr low"></b>
      </div>
      <div class="group"><i class="grip"></i>
        <button class="tb"><svg><use href="#i-layers"/></svg></button>
        <button class="tb"><svg><use href="#i-csys"/></svg></button><b class="arr"></b>
        <i class="sep"></i>
        <button class="tb"><svg><use href="#i-hand"/></svg></button>
        <button class="tb"><svg><use href="#i-paint"/></svg></button>
        <i class="sep"></i>
        <button class="tb"><svg><use href="#i-anim"/></svg></button><b class="arr"></b>
        <i class="sep"></i>
        <button class="tb"><svg><use href="#i-measure"/></svg></button><b class="arr"></b>
        <button class="tb"><svg><use href="#i-ruler"/></svg></button>
        <b class="arr low"></b>
      </div>
      <div class="group"><i class="grip"></i>
        <button class="tb"><svg><use href="#i-g-check"/></svg></button>
        <button class="tb"><svg><use href="#i-g-plug-tree"/></svg></button>
        <button class="tb"><svg><use href="#i-g-table"/></svg></button>
        <button class="tb"><svg><use href="#i-g-axes"/></svg></button>
        <b class="arr low"></b>
      </div>
      <div class="group"><i class="grip"></i>
        <button class="tb"><svg><use href="#i-g-check"/></svg></button>
        <button class="tb"><svg><use href="#i-g-plug-page"/></svg></button>
        <button class="tb"><svg><use href="#i-g-plug-tree"/></svg></button>
        <button class="tb"><svg><use href="#i-g-table"/></svg></button>
        <i class="sep"></i>
        <button class="tb"><svg><use href="#i-g-flag"/></svg></button>
        <i class="sep"></i>
        <button class="tb"><svg><use href="#i-g-stack"/></svg></button>
        <button class="tb"><svg><use href="#i-g-report"/></svg></button>
        <i class="sep"></i>
        <button class="tb"><svg><use href="#i-g-tpage"/></svg></button>
        <button class="tb"><svg><use href="#i-g-twrench"/></svg></button>
        <button class="tb"><svg><use href="#i-g-tclock"/></svg></button>
        <button class="tb"><svg><use href="#i-paste"/></svg></button>
        <b class="arr low"></b>
      </div>
    </div>

    <div class="toolbar second">
      <div class="group"><i class="grip"></i>
        <button class="tb"><svg><use href="#i-g-twrench"/></svg></button>
        <button class="tb"><svg><use href="#i-g-tcut"/></svg></button>
        <button class="tb"><svg><use href="#i-g-tcopy"/></svg></button>
        <button class="tb"><svg><use href="#i-g-tpage"/></svg></button>
        <button class="tb"><svg><use href="#i-paste"/></svg></button>
        <button class="tb"><svg><use href="#i-g-tx"/></svg></button>
        <button class="tb"><svg><use href="#i-g-tinfo"/></svg></button>
        <button class="tb"><svg><use href="#i-g-torch"/></svg></button>
        <b class="arr low"></b>
      </div>
      <div class="group"><i class="grip"></i>
        <button class="tb"><svg><use href="#i-g-gen"/></svg></button>
        <button class="tb"><svg><use href="#i-g-snake"/></svg></button>
        <button class="tb"><svg><use href="#i-g-verify"/></svg></button>
        <button class="tb"><svg><use href="#i-g-spage"/></svg></button>
        <button class="tb"><svg><use href="#i-g-verify"/></svg></button>
        <button class="tb"><svg><use href="#i-g-cards"/></svg></button>
        <i class="sep"></i>
        <button class="tb"><svg><use href="#i-g-drive"/></svg></button>
        <button class="tb"><svg><use href="#i-g-report"/></svg></button>
        <button class="tb"><svg><use href="#i-g-tclock"/></svg></button>
        <b class="arr low"></b>
      </div>
      <div class="group"><i class="grip"></i>
        <button class="tb"><svg><use href="#i-g-light"/></svg></button>
        <button class="tb"><svg><use href="#i-g-snake"/></svg></button>
        <button class="tb on"><svg><use href="#i-hatch1"/></svg></button>
        <button class="tb on"><svg><use href="#i-hatch2"/></svg></button>
        <button class="tb"><svg><use href="#i-circle"/></svg></button>
        <button class="tb"><svg><use href="#i-spline"/></svg></button>
        <button class="tb"><svg><use href="#i-pal1"/></svg></button>
        <button class="tb"><svg><use href="#i-pal2"/></svg></button>
        <button class="tb"><svg><use href="#i-pal3"/></svg></button>
        <button class="tb"><svg><use href="#i-rainruler"/></svg></button>
        <button class="tb"><svg><use href="#i-tool1"/></svg></button>
        <button class="tb"><svg><use href="#i-tool2"/></svg></button>
        <button class="tb"><svg><use href="#i-tool3"/></svg></button>
        <button class="tb"><svg><use href="#i-vector"/></svg></button>
        <button class="tb"><svg><use href="#i-plus"/></svg></button>
        <button class="tb"><svg><use href="#i-snakept"/></svg></button>
        <button class="tb"><svg><use href="#i-line1"/></svg></button>
        <button class="tb"><svg><use href="#i-line2"/></svg></button>
        <button class="tb"><svg><use href="#i-line3"/></svg></button>
        <b class="arr low"></b>
      </div>
      <div class="group"><i class="grip"></i>
        <button class="tb"><svg><use href="#i-g-holder"/></svg></button>
        <button class="tb"><svg><use href="#i-g-holder2"/></svg></button><b class="arr"></b>
        <button class="tb"><svg><use href="#i-g-holder3"/></svg></button><b class="arr"></b>
        <button class="tb"><svg><use href="#i-g-shaft"/></svg></button><b class="arr"></b>
        <b class="arr low"></b>
      </div>
      <div class="group"><i class="grip"></i>
        <button class="tb"><svg><use href="#i-g-wave"/></svg></button>
        <button class="tb"><svg><use href="#i-g-btree"/></svg></button>
        <i class="sep"></i>
        <button class="tb"><svg><use href="#i-g-find"/></svg></button>
        <button class="tb"><svg><use href="#i-g-pt"/></svg></button>
        <button class="tb"><svg><use href="#i-g-ring"/></svg></button>
        <button class="tb"><svg><use href="#i-g-cyl"/></svg></button>
        <button class="tb"><svg><use href="#i-g-bcard"/></svg></button>
        <i class="sep"></i>
        <button class="tb"><svg><use href="#i-g-bdrill"/></svg></button>
        <i class="sep"></i>
        <button class="tb"><svg><use href="#i-x"/></svg></button>
        <b class="arr low"></b>
      </div>
    </div>

    <div class="toolbar small">
      <span class="combo off"><select disabled aria-label="类型过滤器"><option></option></select></span>
      <span class="combo off mid"><select disabled aria-label="选择范围"><option>整个装配</option></select></span>
      <button class="tb"><svg><use href="#i-s-pair"/></svg></button>
      <i class="sep"></i>
      <button class="tb narrow"><svg><use href="#i-s-filter"/></svg></button>
      <button class="tb narrow"><svg><use href="#i-s-red"/></svg></button><b class="arr"></b>
      <button class="tb"><svg><use href="#i-s-turn"/></svg></button>
      <button class="tb"><svg><use href="#i-s-up"/></svg></button>
      <i class="sep"></i>
      <button class="tb"><svg><use href="#i-s-hex"/></svg></button>
      <button class="tb"><svg><use href="#i-s-hexpt"/></svg></button>
      <button class="tb"><svg><use href="#i-s-box"/></svg></button><b class="arr"></b>
      <i class="sep"></i>
      <button class="tb"><svg><use href="#i-s-mesh"/></svg></button>
      <button class="tb"><svg><use href="#i-cube"/></svg></button>
      <i class="sep"></i>
      <span class="combo off mid rule"><select disabled aria-label="面规则"><option>单个面</option></select></span>
      <span class="combo off mid"><select disabled aria-label="曲线规则"><option>单条曲线</option></select></span>
      <span class="combo off mid"><select disabled aria-label="体规则"><option>单个体</option></select></span>
      <button class="tb"><svg><use href="#i-s-wave"/></svg></button>
      <button class="tb"><svg><use href="#i-s-arrow"/></svg></button>
      <i class="sep"></i>
      <button class="tb"><svg><use href="#i-s-move"/></svg></button>
      <button class="tb"><svg><use href="#i-s-l1"/></svg></button>
      <button class="tb"><svg><use href="#i-s-l2"/></svg></button>
      <button class="tb"><svg><use href="#i-s-s"/></svg></button>
      <button class="tb"><svg><use href="#i-s-arc"/></svg></button>
      <button class="tb"><svg><use href="#i-s-c"/></svg></button>
      <button class="tb"><svg><use href="#i-s-c4"/></svg></button>
      <button class="tb"><svg><use href="#i-s-plus"/></svg></button>
      <button class="tb"><svg><use href="#i-s-l2"/></svg></button>
      <button class="tb"><svg><use href="#i-s-mesh"/></svg></button>
      <button class="tb"><svg><use href="#i-s-mesh"/></svg></button>
      <i class="sep"></i>
      <button class="tb"><svg><use href="#i-s-grid"/></svg></button>
      <b class="arr low end"></b>
    </div>

    <main class="workspace">
      <nav class="resource">
        <button class="gear"><svg><use href="#i-gear"/></svg></button>
        <button><svg><use href="#i-r-asm"/></svg></button>
        <button><svg><use href="#i-r-con"/></svg></button>
        <button class="active"><svg><use href="#i-r-part"/></svg></button>
        <button><svg><use href="#i-r-op"/></svg></button>
        <button><svg><use href="#i-r-mach"/></svg></button>
        <button><svg><use href="#i-r-sim"/></svg></button>
        <button><svg><use href="#i-r-books"/></svg></button>
        <button class="gap"><svg><use href="#i-r-info"/></svg></button>
        <button class="gap"><svg><use href="#i-r-web"/></svg></button>
        <button class="gap"><svg><use href="#i-r-clock"/></svg></button>
        <button><svg><use href="#i-r-rain"/></svg></button>
        <button><svg><use href="#i-r-wiz"/></svg></button>
        <button><svg><use href="#i-r-robot"/></svg></button>
      </nav>

      <section class="navigator">
        <h2>部件导航器</h2>
        <div class="treebox">
          <table class="tree">
            <thead>
              <tr><th>名称 <i class="sort"></i></th><th class="col2"></th></tr>
            </thead>
            <tbody>
              <tr><td><div class="node"><i class="pm plus"></i><svg><use href="#i-t-view"/></svg>模型视图</div></td><td></td></tr>
              <tr><td><div class="node"><i class="pm plus"></i><svg class="tick"><use href="#i-t-check"/></svg><svg><use href="#i-t-cam"/></svg>摄像机</div></td><td></td></tr>
              <tr><td><div class="node"><i class="pm"></i><svg><use href="#i-t-folder"/></svg>模型历史记录</div></td><td></td></tr>
              <tr><td><label class="node leaf"><input type="checkbox" checked><svg><use href="#i-t-csys"/></svg>基准坐标系 (0)</label></td><td></td></tr>
              <tr><td><label class="node leaf"><input type="checkbox" checked><svg><use href="#i-cube"/></svg>块 (1)</label></td><td></td></tr>
              <tr><td><label class="node leaf current-node"><input type="checkbox" checked><svg><use href="#i-t-chamfer"/></svg>倒斜角 (2)</label></td><td></td></tr>
            </tbody>
          </table>
          <div class="rows"></div>
          <div class="hscroll"><button aria-label="向左"><svg viewBox="0 0 8 8"><path d="M6 1L3 4l3 3" fill="none" stroke="#444" stroke-width="1.600"/></svg></button><div class="track"><div class="thumb"></div></div><button aria-label="向右"><svg viewBox="0 0 8 8"><path d="M2 1l3 3-3 3" fill="none" stroke="#444" stroke-width="1.600"/></svg></button></div>
        </div>
        <div class="splitter"></div>
        <button class="fold">相关性<svg viewBox="0 0 12 10"><path d="M2 1l4 7 4-7" fill="none" stroke="#00688b" stroke-width="2"/></svg></button>
        <button class="fold">细节<svg viewBox="0 0 12 10"><path d="M2 1l4 7 4-7" fill="none" stroke="#00688b" stroke-width="2"/></svg></button>
        <button class="fold">预览<svg viewBox="0 0 12 10"><path d="M2 1l4 7 4-7" fill="none" stroke="#00688b" stroke-width="2"/></svg></button>
      </section>

      <section class="viewport">
        <svg viewBox="364 176 1556 808" preserveAspectRatio="xMinYMin meet">
          <!-- stock -->
          <path d="M694 490h896v224H694z" fill="#ffa306" stroke="#8a7650"/>
          <path d="M694 491h896v110H694z" fill="#0ff"/>
          <!-- cut levels -->
          <path d="M1142 494v106" stroke="#ffc400" stroke-width="896" stroke-dasharray="1 8"/>
          <path d="M1142 498v102" stroke="#d8dc90" stroke-width="896" stroke-dasharray="1.500 7.500"/>
          <path d="M694 490.500h896M694 602h896" stroke="#a9822e" stroke-width="2"/>
          <path d="M693.500 490v112M1590.500 490v112" stroke="#7d8c86"/>
          <path d="M693.500 493v76M1590.500 496v104" stroke="#0f2" stroke-width="2" stroke-dasharray="4 5"/>
          <path d="M1590 492.500h330" stroke="#ffc400" stroke-width="3"/>
          <path d="M364 599h330" stroke="#fad3e2" stroke-width="3"/>
          <!-- engage and retract moves -->
          <path d="M698 354v384M714 354v384" stroke="#f9a14c" stroke-width="8" stroke-dasharray="2.200 2.250"/>
          <path d="M694 350.500h48M694 741.500h48" stroke="#f9a14c" stroke-width="2"/>
          <!-- coordinate systems -->
          <path d="M694 646.500h67.500V714" fill="none" stroke="#dcc8bd" stroke-width="1.500"/>
          <path d="M694 600v114" stroke="#9a96d8" stroke-width="2"/>
          <path d="M694 714.500h140" stroke="#a3a89a" stroke-width="1.500"/>
          <path d="M693 612l-3 18h4zM693 582l-3 14h4z" fill="#2447c8"/>
          <path d="M691 569h4M690 577h4" stroke="#2447c8" stroke-width="1.500"/>
          <path d="M777 710l19 4-19 4z" fill="#1f6a2a"/><path d="M777 710l19 4h-19z" fill="#a5e0a5"/>
          <path d="M811 711l16 3-16 4z" fill="#1a1a9a"/><path d="M811 710l16 4h-16z" fill="#f2f2ff"/>
          <path d="M686 714h10M693 708v12M690 710l7 8" stroke="#11c" stroke-width="2"/>
          <g class="axis"><text x="700" y="608" fill="#2a4ad8">ZM</text><text x="695" y="714" fill="#d4462a">XM</text><text x="782" y="709" fill="#3f9a3f">YM</text><text x="829" y="719" fill="#d0cdea">Y</text></g>
          <!-- view triad -->
          <path d="M430 891h25v25h-25z" fill="#d2d2d2" stroke="#bbb"/>
          <path d="M429 888v28" stroke="#9a9ae0" stroke-width="2"/><path d="M429 873l3 10-2 2v7h-2v-7l-2-2z" fill="#0a3cf0"/>
          <path d="M430 917h30" stroke="#5a7a5a" stroke-width="2"/><path d="M455 916h7v-2l11 3-11 3v-2h-7z" fill="#2aa02a"/>
          <path d="M426 914l3 1 3-1-1 3 1 3-3-1-3 1 1-3z" fill="#e22" stroke="#711" stroke-width="1.500"/>
          <g class="axis"><text x="425" y="872" fill="#4a5af0">Z</text><text x="474" y="921" fill="#4aa04a">Y</text></g>
        </svg>
      </section>
    </main>

    <div class="toolbar bottom">
      <div class="group"><i class="grip"></i>
        <button class="tb"><svg><use href="#i-g-grid-tree"/></svg></button>
        <button class="tb"><svg><use href="#i-g-mill-tree"/></svg></button>
        <button class="tb"><svg><use href="#i-g-btree"/></svg></button>
        <button class="tb"><svg><use href="#i-g-crown-tree"/></svg></button>
        <b class="arr low"></b>
      </div>
      <div class="group closed"><i class="grip"></i>
        <button class="tb"><svg><use href="#i-g-newgrid"/></svg></button>
        <button class="tb"><svg><use href="#i-g-newmill"/></svg></button>
        <button class="tb"><svg><use href="#i-g-newblock"/></svg></button>
        <button class="tb"><svg><use href="#i-g-newcrown"/></svg></button>
        <button class="tb"><svg><use href="#i-g-newop"/></svg></button>
        <b class="arr low"></b>
      </div>
      <div class="group closed analysis"><i class="grip"></i>
        <button class="tb"><svg><use href="#i-hot"/></svg></button><b class="arr"></b>
        <button class="tb"><svg><use href="#i-g-chain"/></svg></button>
        <button class="tb"><svg><use href="#i-g-plus"/></svg></button><b class="arr"></b>
        <button class="tb"><svg><use href="#i-g-lift"/></svg></button><b class="arr"></b>
        <button class="tb"><svg><use href="#i-g-tube"/></svg></button>
        <button class="tb"><svg><use href="#i-ipw"/></svg></button>
        <button class="tb"><svg><use href="#i-g-wire"/></svg></button><b class="arr"></b>
        <b class="arr low"></b>
      </div>
    </div>

    <div class="status">
      <span class="cue">指定切削参数</span>
      <span class="current">当前：ZLEVEL_PROFILE_1</span>
      <svg viewBox="0 0 16 16"><path d="M.5 4V.5H4M12 .5h3.500V4M15.500 12v3.500H12M4 15.500H.5V12" fill="none" stroke="#999"/><path d="M3.500 3.500h9v9h-9z" fill="#fff" stroke="#555"/><path d="M5 6h6v5H5z" fill="#4a7ac8"/></svg>
    </div>

    <footer class="taskbar">
      <button class="task win-start"><svg viewBox="0 0 16 16"><path d="M0 2.500l7-1v6H0zM8 1.300L16 0v7.500H8zM0 8.500h7v6l-7-1zM8 8.500h8V16l-8-1.300z" fill="#fff"/></svg></button>
      <label class="cortana">
        <svg viewBox="0 0 20 20"><circle cx="10" cy="10" r="8" fill="none" stroke="#111" stroke-width="3"/></svg>
        <input type="text" placeholder="在这里输入你要搜索的内容" aria-label="搜索">
        <svg viewBox="0 0 20 20" fill="none" stroke="#222" stroke-width="1.300"><rect x="7.500" y="2" width="5" height="10" rx="1"/><path d="M5 10v3c0 3 10 3 10 0v-3M10 15v4M7 19h6"/></svg>
      </label>
      <button class="task"><svg viewBox="0 0 24 24" fill="none" stroke="#fff"><path d="M6.500 5.500h11v13h-11zM3.500 7.500h-2v9h2M20.500 7.500h2v9h-2"/></svg></button>
      <button class="task run"><svg viewBox="0 0 24 24"><path d="M2 11C3 4 8 1 13 1c6 0 9 4 9 9v4H9c0 5 7 6 12 3v4c-8 4-18 2-18-8 0-5 3-8 7-9-2 1-3 3-3 6h9c0-6-9-7-14 1z" fill="#0d7ad8"/></svg></button>
      <button class="task run"><svg viewBox="0 0 24 24"><path d="M1 3h8l2 3h12v15H1z" fill="#f5cf6a"/><path d="M1 8h22v13H1z" fill="#ffe496"/><path d="M5 22v-7h14v7h-4v-3H9v3z" fill="#3fa3e0"/></svg></button>
      <button class="task"><svg viewBox="0 0 24 24"><path d="M1 7h22v16H1z" fill="#fff"/><path d="M8 7c0-7 8-7 8 0" fill="none" stroke="#fff" stroke-width="1.500"/><path d="M6 9h5v5H6z" fill="#e8502a"/><path d="M12 9h5v5h-5z" fill="#7cb82f"/><path d="M6 15h5v5H6z" fill="#2a9fe0"/><path d="M12 15h5v5h-5z" fill="#f5b81a"/></svg></button>
      <button class="task"><svg viewBox="0 0 24 24"><path d="M0 9l12-7 12 7v13H0z" fill="#fff"/><path d="M2 10l20 0-8 4 2 5-6-5z" fill="#222"/></svg></button>
      <button class="task run open"><svg><use href="#i-globe"/></svg></button>
      <button class="task run"><svg viewBox="0 0 24 24"><path d="M0 0h24v24H0z" fill="#0078d7"/><path d="M12 7c3 0 3 4 3 6s1 4 0 4H9c-1 0 0-2 0-4s0-6 3-6z" fill="#fff"/></svg></button>

      <div class="tray">
        <svg viewBox="0 0 16 16" fill="none" stroke="#fff" stroke-width="1.200"><circle cx="5" cy="7" r="2.500"/><circle cx="11" cy="3.500" r="2.500"/><path d="M1 15c0-6 8-6 8 0M9 8c3-3 6 0 6 3"/></svg>
        <svg viewBox="0 0 16 16"><path d="M2 11l6-6 6 6" fill="none" stroke="#fff" stroke-width="1.500"/></svg>
        <svg viewBox="0 0 16 16"><path d="M1 4.500h12v8H1zM14 7h1v3h-1" fill="none" stroke="#fff"/><path d="M3 6h7v5H3z" fill="#7cc8f0"/></svg>
        <svg viewBox="0 0 16 16" fill="none" stroke="#ddd" stroke-width="1.300"><path d="M2 14C2 7 7 2 15 2M5 14c0-5 4-9 10-9M8 14c0-4 3-6 7-6M11 14c0-2 2-3 4-3"/></svg>
        <svg viewBox="0 0 16 16" fill="none" stroke="#fff"><path d="M1 6h3l4-4v12l-4-4H1zM10 6c1 1 1 3 0 4M12 4c2 2 2 6 0 8M14 2c3 3 3 9 0 12"/></svg>
        <span>中</span>
        <span class="ime">五</span>
        <div class="clock"><time>22:11</time><time>2018/2/10</time></div>
        <button class="notice"><svg viewBox="0 0 24 24"><path d="M1 2h17v12H8l-3 4v-4H1z" fill="#fff"/><path d="M4 5h11M4 8h11M4 11h7" stroke="#222"/><circle cx="16" cy="17" r="7" fill="#333" stroke="#aaa"/></svg><span>1</span></button>
      </div>
    </footer>
  </div>

  <form class="dialog" onsubmit="return false">
    <header><svg><use href="#i-gear"/></svg><h2>切削参数</h2><button type="button" aria-label="关闭"><svg viewBox="0 0 12 12"><path d="M1 1l10 10M11 1L1 11" stroke="#fff" stroke-width="2"/></svg></button></header>
    <div class="tabs">
      <div class="tabrow back"><button type="button">连接</button><button type="button">空间范围</button><button type="button">更多</button></div>
      <div class="tabrow"><button type="button" class="active">策略</button><button type="button">余量</button><button type="button">拐角</button></div>
    </div>
    <div class="page">
      <fieldset>
        <h3>切削<svg viewBox="0 0 12 10"><path d="M2 9l4-7 4 7" fill="none" stroke="#00688b" stroke-width="2"/></svg></h3>
        <div class="field"><label for="dir">切削方向</label><span class="combo focus"><select id="dir"><option>混合</option></select></span></div>
        <div class="field"><label for="order">切削顺序</label><span class="combo"><select id="order"><option>深度优先</option></select></span></div>
      </fieldset>
      <fieldset>
        <h3>延伸路径<svg viewBox="0 0 12 10"><path d="M2 9l4-7 4 7" fill="none" stroke="#00688b" stroke-width="2"/></svg></h3>
        <label class="check"><input type="checkbox">在边上延伸</label>
        <label class="check"><input type="checkbox">在边上滚动刀具</label>
        <label class="check"><input type="checkbox">在刀具接触点下继续切削</label>
      </fieldset>
    </div>
    <div class="actions"><button class="ok">确定</button><button type="button">取消</button></div>
  </form>

  <div class="watermark">
    <svg viewBox="0 0 72 80">
      <path d="M36 0l36 20v40L36 80 0 60V20z" fill="#7ccdf5" fill-opacity=".75"/>
      <path d="M0 20L36 0l16 9c4 8 5 15 3 24L36 20 12 15z" fill="#d8f0fd"/>
      <path d="M0 20c14-8 26-8 36 0L17 31v21C8 40 4 50 0 48z" fill="#b9e4fb" fill-opacity=".8"/>
      <path d="M17 54l19 9 36-14v11L36 80 18 70z" fill="#1683bd" fill-opacity=".75"/>
      <path d="M17 31l19-12 18 12v22L36 63 17 52z" fill="#fff"/>
      <path d="M36 22l16 9-16 9-16-9z" fill="#a9dcf7"/><path d="M20 33l15 8v17l-15-8z" fill="#9ed8f7"/><path d="M52 33l-15 8v17l15-8z" fill="#6fc1ea"/>
      <path d="M0 20c14-8 26-8 36 0M51 9c5 10 5 30 4 40M72 36c-5 12-10 15-18 20M0 46c4-8 10-14 17-16M18 70c-2-6-2-12-1-18" fill="none" stroke="#fff"/>
    </svg>
    <span>WWW.3DSJW.COM</span>
  </div>
</body>

</html>
```
FILE: styles.css
```css
* {
  box-sizing: border-box;
}

html,
body {
  margin: 0;
  padding: 0;
  height: 100%;
  overflow: hidden;
}

body,
button,
input,
select {
  font-family: "Open Sans", "Noto Sans CJK SC", sans-serif;
  font-size: 12px;
  line-height: 16px;
  color: #1a1a1a;
}

button {
  margin: 0;
  padding: 0;
  border: 0;
  background: none;
}

h1,
h2,
h3 {
  margin: 0;
  font-weight: normal;
}

svg {
  display: block;
  flex: none;
}

.sprite {
  position: absolute;
  width: 0;
  height: 0;
}

.app {
  display: flex;
  flex-direction: column;
  height: 100%;
  background: #fff;
}

/* title */
.titlebar {
  display: flex;
  align-items: center;
  height: 26px;
  padding-right: 2px;
}

.nx {
  width: 37px;
  margin-left: 4px;
  font: bold 22px/24px "Liberation Sans", sans-serif;
  color: #8299ad;
  border-right: 1px solid #ccc;
}

.titlebar h1 {
  margin-left: 5px;
  font-size: 13px;
  line-height: 24px;
  flex: 1;
}

.siemens {
  margin-right: 19px;
  font-size: 13px;
  font-weight: 800;
  color: #009999;
}

.win {
  width: 24px;
  height: 24px;
  display: flex;
  align-items: center;
  justify-content: center;
}

.win svg {
  width: 12px;
  height: 12px;
}

/* menu */
.menubar {
  display: flex;
  align-items: center;
  gap: 11px;
  height: 27px;
  padding: 0 0 2px 1px;
  background: #559fb8;
}

.menubar a {
  color: #1a1a1a;
  text-decoration: none;
}

.menubar .wide {
  margin-left: 7px;
}

.grip {
  width: 8px;
  height: 26px;
  flex: none;
  background: repeating-linear-gradient(#999 0 2px, transparent 2px 4px) 3px 0 / 2px 100% no-repeat;
}

.menubar .grip {
  height: 20px;
  margin-right: -6px;
  background: repeating-linear-gradient(#b5d5df 0 2px, transparent 2px 4px) 2px 0 / 2px 100% no-repeat;
}

/* toolbars */
.toolbar {
  display: flex;
  height: 34px;
}

.second {
  padding-left: 130px;
}

.group {
  display: flex;
  align-items: center;
  border-bottom: 1px solid #dadada;
  box-shadow: -1px 0 #dadada;
}

.group:last-child,
.group.closed {
  border-right: 1px solid #dadada;
}

.tb {
  width: 31px;
  height: 32px;
  display: flex;
  align-items: center;
  justify-content: center;
  flex: none;
}

.tb svg {
  width: 24px;
  height: 24px;
}

.tb.on {
  background: #cce6eb;
  border: 1px solid #a5d0da;
}

.tb.start {
  width: 65px;
  justify-content: flex-start;
  gap: 3px;
  padding-left: 2px;
}

.sep {
  width: 2px;
  height: 26px;
  margin: 0 2px;
  flex: none;
  background: #dcdcdc;
}

.arr {
  width: 12px;
  display: flex;
  justify-content: center;
  flex: none;
}

.arr::before {
  content: "";
  border: 3px solid transparent;
  border-top: 4px solid #111;
  border-bottom: 0;
}

.arr.off::before {
  border-top-color: #999;
}

.arr.low {
  width: 14px;
  height: 12px;
  align-self: flex-end;
}

.start .arr {
  width: 8px;
}

.finder {
  display: flex;
  align-items: center;
  width: 125px;
  height: 20px;
  margin: 0 4px;
  border: 1px solid #888;
  background: #fff;
}

.finder input {
  flex: 1;
  min-width: 0;
  border: 0;
  padding: 0 1px;
  background: none;
}

.finder svg {
  width: 16px;
  height: 16px;
}

.small {
  height: 32px;
  align-items: center;
  padding-left: 5px;
  border-bottom: 1px solid #888;
}

.small .tb {
  width: 23px;
}

.small .tb.narrow {
  width: 20px;
}

.small .tb svg {
  width: 16px;
  height: 16px;
}

.small .arr {
  width: 10px;
}

.small .arr.end {
  width: 14px;
  margin-left: auto;
}

/* drop-downs */
.combo {
  display: flex;
  align-items: center;
  height: 25px;
  padding: 2px 0 2px 2px;
  border: 1px solid #a5a5a5;
  background: #fff;
}

.combo select {
  appearance: none;
  flex: 1;
  min-width: 0;
  height: 19px;
  padding: 0 1px;
  border: 0;
  border-radius: 0;
  background: none;
  outline: none;
}

.combo::after {
  content: "";
  margin: 0 5px 0 6px;
  border: 4px solid transparent;
  border-top: 4px solid #111;
  border-bottom: 0;
}

.combo.focus select {
  background: #afd6e1;
  outline: 1px dotted #222;
}

.combo.off {
  width: 133px;
  height: 20px;
  margin-right: 7px;
  padding: 0 0 0 1px;
}

.combo.off.mid {
  width: 140px;
}

.combo.off.rule {
  margin-left: 6px;
}

.combo.off select {
  height: 18px;
  color: #999;
  opacity: 1;
}

.combo.off::after {
  border-top-color: #999;
}

/* work area */
.workspace {
  flex: 1;
  min-height: 0;
  display: flex;
}

.resource {
  width: 32px;
  background: #dbdbdb;
  border-right: 1px solid #a5a5a5;
}

.resource button {
  width: 31px;
  height: 42px;
  display: flex;
  align-items: center;
  justify-content: center;
  padding-left: 4px;
}

.resource button svg {
  width: 24px;
  height: 24px;
}

.resource .gear {
  height: 26px;
  margin-bottom: 16px;
  padding: 0 2px 0 0;
}

.resource .gear svg {
  width: 14px;
  height: 14px;
}

.resource .active {
  width: 30px;
  margin-left: 2px;
  height: 45px;
  margin-bottom: -3px;
  padding-left: 2px;
  background: #fff;
  border: 1px solid #a5a5a5;
  border-right: 0;
}

.resource .gap {
  margin-top: 12px;
}

.navigator {
  width: 331px;
  padding: 0 9px 6px 6px;
  display: flex;
  flex-direction: column;
}

.navigator h2 {
  height: 28px;
  padding-left: 4px;
  font-size: 12px;
  line-height: 29px;
}

.treebox {
  flex: 1;
  display: flex;
  flex-direction: column;
  padding: 1px;
  border: 1px solid #cfcfcf;
}

.tree {
  width: 100%;
  table-layout: fixed;
  border-collapse: collapse;
}

.tree th {
  height: 21px;
  padding: 2px 6px 0;
  text-align: left;
  font-weight: normal;
  background: #efefef;
  border-bottom: 1px solid #d0d0d0;
}

.tree .col2 {
  width: 79px;
}

.sort {
  display: inline-block;
  margin: 0 0 3px 14px;
  border: 5px solid transparent;
  border-bottom: 5px solid #111;
  border-top: 0;
}

.tree td {
  height: 20px;
  padding: 0;
  border-bottom: 1px solid #e8e8e8;
  border-right: 1px solid #e8e8e8;
}

.tree tr:nth-child(even) td {
  background: #fafafa;
}

.node {
  display: flex;
  align-items: center;
  gap: 3px;
  height: 19px;
  padding-left: 5px;
}

.node svg {
  width: 16px;
  height: 16px;
}

.node .tick {
  width: 12px;
  height: 12px;
}

.pm {
  width: 9px;
  height: 9px;
  margin-right: 2px;
  border: 1px solid #bbb;
  background: linear-gradient(#111, #111) 1px 3px / 5px 1px no-repeat;
}

.pm.plus {
  background: linear-gradient(#111, #111) 1px 3px / 5px 1px no-repeat, linear-gradient(#111, #111) 3px 1px / 1px 5px no-repeat;
}

.leaf {
  margin-left: 28px;
  padding-left: 0;
  border-left: 1px dotted #999;
}

.leaf::before {
  content: "";
  width: 7px;
  border-top: 1px dotted #999;
}

.leaf input,
.check input {
  appearance: none;
  width: 13px;
  height: 13px;
  margin: 0;
  border: 1px solid #222;
  background: #fff;
}

.leaf input:checked::before {
  content: "";
  display: block;
  width: 11px;
  height: 11px;
  background: #1fb51f;
  clip-path: polygon(5% 45%, 25% 40%, 40% 62%, 85% 5%, 100% 12%, 45% 95%, 32% 95%);
}

.current-node {
  font-weight: bold;
}

.rows {
  flex: 1;
  background:
    linear-gradient(#e8e8e8, #e8e8e8) right 79px top 0 / 1px 100% no-repeat,
    repeating-linear-gradient(#fff 0 19px, #e8e8e8 19px 20px, #fafafa 20px 39px, #e8e8e8 39px 40px);
}

.hscroll {
  display: flex;
  height: 16px;
  background: #efefef;
}

.hscroll button {
  width: 17px;
  display: flex;
  align-items: center;
  justify-content: center;
}

.hscroll svg {
  width: 8px;
  height: 8px;
}

.track {
  flex: 1;
}

.thumb {
  width: 72%;
  height: 100%;
  background: #cdcdcd;
}

.splitter {
  height: 5px;
  margin-top: 1px;
  border: 1px solid #aaa;
  background: #dcdcdc;
}

.fold {
  display: flex;
  align-items: center;
  justify-content: space-between;
  height: 24px;
  padding: 2px 5px 0 7px;
  font-size: 14px;
  color: #00688b;
  border-bottom: 2px solid #d0d0d0;
}

.fold svg,
.dialog h3 svg {
  width: 12px;
  height: 10px;
}

.viewport {
  flex: 1;
  min-width: 0;
  margin-top: 21px;
  border-top: 2px solid #559fb8;
  border-left: 1px solid #999;
  background: linear-gradient(#b3b4b6, #c6c7c8 25%, #d8d9da 52%, #e5e6e8 80%, #e6e7e9);
}

.viewport svg {
  width: 100%;
  height: 100%;
}

.axis {
  font: 14px "Liberation Sans", sans-serif;
}

/* bottom bars */
.bottom {
  height: 35px;
  padding-left: 46px;
}

.analysis {
  margin-left: auto;
  margin-right: 38%;
}

.status {
  display: flex;
  align-items: center;
  height: 21px;
  padding: 0 55px 3px 3px;
  border-top: 1px solid #a5a5a5;
  font-size: 11px;
}

.cue {
  width: 49%;
}

.current {
  flex: 1;
  font-weight: bold;
}

.status svg {
  width: 16px;
  height: 16px;
}

.taskbar {
  display: flex;
  height: 40px;
  background: #1f1c1c;
}

.task {
  width: 49px;
  display: flex;
  align-items: center;
  justify-content: center;
}

.task svg {
  width: 24px;
  height: 24px;
}

.task.win-start {
  width: 48px;
}

.win-start svg {
  width: 16px;
  height: 16px;
}

.task.run {
  background: linear-gradient(#76b9ed, #76b9ed) center bottom / 40px 2px no-repeat;
}

.task.run.open {
  background: linear-gradient(#76b9ed, #76b9ed) center bottom / 100% 2px no-repeat #4a4747;
}

.cortana {
  display: flex;
  align-items: center;
  width: 344px;
  padding: 0 10px;
  background: #f2f2f2;
}

.cortana svg {
  width: 20px;
  height: 20px;
}

.cortana input {
  flex: 1;
  min-width: 0;
  margin-left: 8px;
  border: 0;
  background: none;
  font-size: 14px;
  line-height: 20px;
}

.cortana input::placeholder {
  color: #222;
}

.tray {
  display: flex;
  align-items: center;
  gap: 8px;
  margin-left: auto;
  color: #fff;
  font-size: 14px;
}

.tray > svg {
  width: 16px;
  height: 16px;
}

.tray > svg:first-child {
  margin-right: 12px;
}

.ime {
  width: 14px;
  height: 14px;
  margin-left: 6px;
  background: #fff;
  color: #111;
  font-size: 12px;
  line-height: 13px;
  text-align: center;
}

.clock {
  width: 76px;
  margin-left: 2px;
  display: flex;
  flex-direction: column;
  align-items: center;
  font-size: 12px;
  line-height: 19px;
}

.notice {
  display: grid;
  place-items: center;
  margin: 0 17px 0 2px;
}

.notice svg,
.notice span {
  grid-area: 1 / 1;
}

.notice svg {
  width: 24px;
  height: 24px;
}

.notice span {
  padding: 10px 0 0 8px;
  color: #fff;
}

/* cutting parameters window */
.dialog {
  position: absolute;
  top: 147px;
  left: 239px;
  width: 328px;
  background: #efefef;
  border: 1px solid #d5d5d5;
  border-top: 0;
}

.dialog > header {
  display: flex;
  align-items: center;
  height: 24px;
  margin: 0 -1px;
  padding: 0 9px 0 7px;
  background: #559fb8;
  color: #fff;
}

.dialog > header svg {
  width: 14px;
  height: 14px;
}

.dialog h2 {
  flex: 1;
  margin-left: 8px;
  font-size: 14px;
}

.tabs {
  margin: 10px 11px 0;
}

.tabrow {
  display: grid;
  grid-template-columns: 102px 1fr 1fr;
  height: 29px;
}

.tabrow.back {
  grid-template-columns: 98px 109px 1fr;
  height: 28px;
}

.tabrow button {
  border: 1px solid #d0d0d0;
  border-bottom: 0;
}

.tabrow .active {
  margin: -2px -3px -1px -2px;
  background: #fff;
  border-color: #bdbdbd;
  z-index: 1;
}

.page {
  height: 256px;
  margin: 0 9px;
  padding: 0 4px;
  background: #fff;
  border: 1px solid #bdbdbd;
}

fieldset {
  min-width: 0;
  margin: 0;
  padding: 0 9px 7px 7px;
  border: 0;
  border-bottom: 2px solid #ccc;
}

.dialog h3 {
  display: flex;
  align-items: center;
  justify-content: space-between;
  height: 26px;
  margin: 0 -4px 4px 0;
  font-size: 14px;
  color: #00688b;
}

.field {
  display: flex;
  align-items: center;
  justify-content: space-between;
  height: 27px;
  padding-left: 2px;
}

.field .combo {
  width: 141px;
}

.check {
  display: flex;
  align-items: center;
  gap: 5px;
  height: 23px;
  padding-left: 2px;
}

.actions {
  display: flex;
  justify-content: flex-end;
  gap: 5px;
  padding: 12px 15px 10px;
}

.actions button {
  width: 54px;
  height: 25px;
  background: #dcdcdc;
  border: 1px solid #aaa;
}

.actions .ok {
  background: #73b3c9;
  border-color: #73b3c9;
  color: #fff;
}

/* site mark over the lower right corner */
.watermark {
  position: absolute;
  right: 25px;
  bottom: 15px;
  display: flex;
  align-items: flex-end;
  gap: 11px;
  color: #aaa;
  font: 19px/34px "DejaVu Sans", sans-serif;
  pointer-events: none;
}

.watermark svg {
  width: 72px;
  height: 80px;
}
```
